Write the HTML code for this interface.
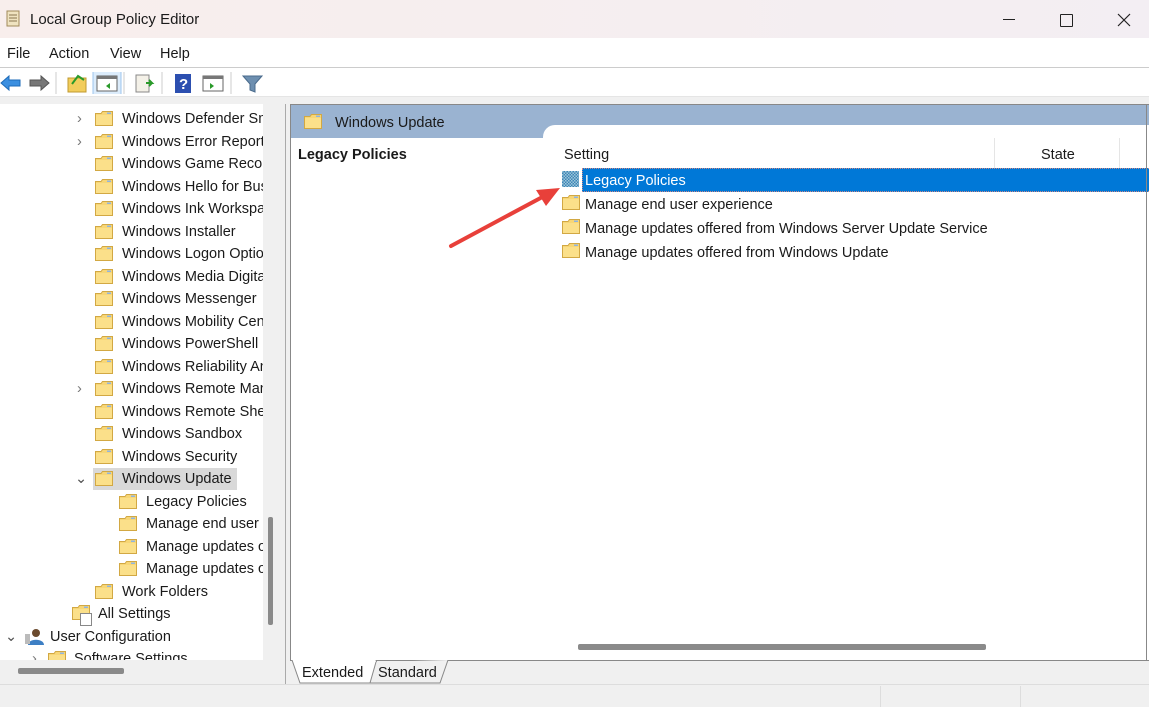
<!DOCTYPE html><html><head><style>
body{margin:0;width:1149px;height:707px;overflow:hidden;background:#f0f0f0;font-family:"Liberation Sans",sans-serif;font-size:14.5px;color:#1a1a1a;position:relative}
.a{position:absolute;white-space:nowrap}
.f{position:absolute;width:18px;height:15px}
.t{position:absolute;line-height:22px}
</style></head><body>
<svg width="0" height="0" style="position:absolute"><defs><symbol id="fd" viewBox="0 0 18 15"><path d="M0.5 2.5 H6 L7.5 0.5 H17.5 V14.5 H0.5Z" fill="#f7d676" stroke="#d2a843"/><rect x="1" y="4" width="16" height="10" fill="#fbe08a"/><rect x="12" y="1.5" width="4" height="1.5" fill="#8fb4e0"/></symbol></defs></svg>
<div class="a" style="left:0;top:0;width:1149px;height:38px;background:linear-gradient(90deg,#f8eeec,#f3eef3)"></div>
<svg class="a" style="left:4px;top:9px" width="18" height="20"><rect x="3" y="2" width="12" height="15" fill="#efe3c0" stroke="#a08a5a"/><path d="M5 6h8M5 9h8M5 12h8" stroke="#8a7550"/></svg>
<div class="a" style="left:30px;top:11px;font-size:15px">Local Group Policy Editor</div>
<div class="a" style="left:1003px;top:19px;width:12px;height:1px;background:#222"></div>
<div class="a" style="left:1060px;top:14px;width:11px;height:11px;border:1px solid #222;border-radius:1px"></div>
<svg class="a" style="left:1117px;top:13px" width="14" height="14"><path d="M1 1L13 13M13 1L1 13" stroke="#222" stroke-width="1.2"/></svg>
<div class="a" style="left:0;top:38px;width:1149px;height:29px;background:#fff;border-bottom:1px solid #ccc"></div>
<div class="a" style="left:7px;top:46px">File</div><div class="a" style="left:49px;top:46px">Action</div><div class="a" style="left:110px;top:46px">View</div><div class="a" style="left:160px;top:46px">Help</div>
<div class="a" style="left:0;top:68px;width:1149px;height:28px;background:#fff;border-bottom:1px solid #e5e5e5"></div>
<svg class="a" style="left:0;top:72px" width="270" height="22">
<path d="M1 11L9 4V8H20V14H9V18Z" fill="#3b8fe0" stroke="#1e6bb8"/>
<path d="M49 11L41 4V8H30V14H41V18Z" fill="#777" stroke="#555"/>
<line x1="56" y1="0" x2="56" y2="22" stroke="#ccc"/>
<rect x="68" y="6" width="18" height="14" fill="#f2cd5c" stroke="#c09a30"/><path d="M72 12 L78 4 L84 8" stroke="#2a9a2a" stroke-width="2" fill="none"/>
<rect x="93" y="-2" width="28" height="26" fill="#dcecfb" stroke="#9cc5ee"/>
<rect x="97" y="4" width="20" height="15" fill="#fff" stroke="#666"/><rect x="97" y="4" width="20" height="3" fill="#777"/><path d="M110 11L106 14L110 17Z" fill="#2a9a2a"/>
<line x1="124" y1="0" x2="124" y2="22" stroke="#ccc"/>
<rect x="136" y="3" width="13" height="17" fill="#f4f1e8" stroke="#888"/><path d="M146 11h6l-3-3M152 11l-3 3" stroke="#2a9a2a" stroke-width="2" fill="none"/>
<line x1="162" y1="0" x2="162" y2="22" stroke="#ccc"/>
<rect x="175" y="2" width="16" height="19" fill="#2c4fb0"/><text x="179" y="17" fill="#fff" font-size="15" font-weight="bold" font-family="Liberation Sans">?</text>
<rect x="203" y="4" width="20" height="15" fill="#fff" stroke="#666"/><rect x="203" y="4" width="20" height="3" fill="#777"/><path d="M210 11L214 14L210 17Z" fill="#2a9a2a"/>
<line x1="231" y1="0" x2="231" y2="22" stroke="#ccc"/>
<path d="M243 4H262L255 12V20L250 18V12Z" fill="#6d8fb0" stroke="#4a6b8c"/>
</svg>
<div class="a" style="left:0;top:104px;width:285px;height:580px;background:#f0f0f0;border-right:1px solid #aaa"></div>
<div class="a" style="left:0;top:104px;width:263px;height:556px;background:#fff"></div>
<div class="a" style="left:268px;top:517px;width:5px;height:108px;background:#8a8a8a;border-radius:2px"></div>
<div class="a" style="left:18px;top:668px;width:106px;height:6px;background:#8a8a8a;border-radius:2px"></div>
<div class="a" style="left:93px;top:468px;width:144px;height:22px;background:#d9d9d9"></div>
<div class="a" style="left:0;top:105px;width:263px;height:555px;overflow:hidden">
<div class="t" style="left:77px;top:3px;color:#777">›</div>
<svg class="f" style="left:95px;top:6px"><use href="#fd"/></svg><div class="t" style="left:122px;top:3px">Windows Defender SmartScreen</div>
<div class="t" style="left:77px;top:26px;color:#777">›</div>
<svg class="f" style="left:95px;top:29px"><use href="#fd"/></svg><div class="t" style="left:122px;top:26px">Windows Error Reporting</div>
<svg class="f" style="left:95px;top:51px"><use href="#fd"/></svg><div class="t" style="left:122px;top:48px">Windows Game Recording</div>
<svg class="f" style="left:95px;top:74px"><use href="#fd"/></svg><div class="t" style="left:122px;top:71px">Windows Hello for Business</div>
<svg class="f" style="left:95px;top:96px"><use href="#fd"/></svg><div class="t" style="left:122px;top:93px">Windows Ink Workspace</div>
<svg class="f" style="left:95px;top:119px"><use href="#fd"/></svg><div class="t" style="left:122px;top:116px">Windows Installer</div>
<svg class="f" style="left:95px;top:141px"><use href="#fd"/></svg><div class="t" style="left:122px;top:138px">Windows Logon Options</div>
<svg class="f" style="left:95px;top:164px"><use href="#fd"/></svg><div class="t" style="left:122px;top:161px">Windows Media Digital</div>
<svg class="f" style="left:95px;top:186px"><use href="#fd"/></svg><div class="t" style="left:122px;top:183px">Windows Messenger</div>
<svg class="f" style="left:95px;top:209px"><use href="#fd"/></svg><div class="t" style="left:122px;top:206px">Windows Mobility Center</div>
<svg class="f" style="left:95px;top:231px"><use href="#fd"/></svg><div class="t" style="left:122px;top:228px">Windows PowerShell</div>
<svg class="f" style="left:95px;top:254px"><use href="#fd"/></svg><div class="t" style="left:122px;top:251px">Windows Reliability Analysis</div>
<div class="t" style="left:77px;top:273px;color:#777">›</div>
<svg class="f" style="left:95px;top:276px"><use href="#fd"/></svg><div class="t" style="left:122px;top:273px">Windows Remote Management</div>
<svg class="f" style="left:95px;top:299px"><use href="#fd"/></svg><div class="t" style="left:122px;top:296px">Windows Remote Shell</div>
<svg class="f" style="left:95px;top:321px"><use href="#fd"/></svg><div class="t" style="left:122px;top:318px">Windows Sandbox</div>
<svg class="f" style="left:95px;top:344px"><use href="#fd"/></svg><div class="t" style="left:122px;top:341px">Windows Security</div>
<div class="t" style="left:75px;top:363px;color:#555">⌄</div>
<svg class="f" style="left:95px;top:366px"><use href="#fd"/></svg><div class="t" style="left:122px;top:363px">Windows Update</div>
<svg class="f" style="left:119px;top:389px"><use href="#fd"/></svg><div class="t" style="left:146px;top:386px">Legacy Policies</div>
<svg class="f" style="left:119px;top:411px"><use href="#fd"/></svg><div class="t" style="left:146px;top:408px">Manage end user experience</div>
<svg class="f" style="left:119px;top:434px"><use href="#fd"/></svg><div class="t" style="left:146px;top:431px">Manage updates offered</div>
<svg class="f" style="left:119px;top:456px"><use href="#fd"/></svg><div class="t" style="left:146px;top:453px">Manage updates offered</div>
<svg class="f" style="left:95px;top:479px"><use href="#fd"/></svg><div class="t" style="left:122px;top:476px">Work Folders</div>
<svg class="f" style="left:72px;top:500px"><use href="#fd"/></svg><div class="a" style="left:80px;top:508px;width:10px;height:11px;background:#fff;border:1px solid #888"></div><div class="t" style="left:98px;top:498px">All Settings</div>
<div class="t" style="left:5px;top:521px;color:#555">⌄</div>
<svg class="a" style="left:24px;top:523px" width="20" height="18"><circle cx="12" cy="5" r="4" fill="#6b4a2e"/><path d="M4 17C4 10 20 10 20 17Z" fill="#3d7fc4"/><rect x="1" y="6" width="5" height="10" fill="#bbb"/></svg><div class="t" style="left:50px;top:521px">User Configuration</div>
<div class="t" style="left:32px;top:543px;color:#777">›</div>
<svg class="f" style="left:48px;top:546px"><use href="#fd"/></svg><div class="t" style="left:74px;top:543px">Software Settings</div>
</div>
<div class="a" style="left:290px;top:104px;width:859px;height:556px;background:#fff;border-left:1px solid #888;border-top:1px solid #888"></div>
<div class="a" style="left:291px;top:105px;width:858px;height:33px;background:#9ab3d1"></div>
<div class="a" style="left:543px;top:125px;width:606px;height:14px;background:#fff;border-top-left-radius:12px"></div>
<svg class="f" style="left:304px;top:114px"><use href="#fd"/></svg>
<div class="a" style="left:335px;top:115px">Windows Update</div>
<div class="a" style="left:298px;top:147px;font-weight:bold">Legacy Policies</div>
<div class="a" style="left:564px;top:147px">Setting</div>
<div class="a" style="left:994px;top:138px;width:1px;height:30px;background:#e5e5e5"></div>
<div class="a" style="left:1119px;top:138px;width:1px;height:30px;background:#e5e5e5"></div>
<div class="a" style="left:1041px;top:147px">State</div>
<div class="a" style="left:582px;top:168px;width:567px;height:22px;background:#0078d7;border:1px dotted #c88"></div>
<svg class="a" style="left:562px;top:171px" width="17" height="16"><defs><pattern id="ck" width="3" height="3" patternUnits="userSpaceOnUse"><rect width="3" height="3" fill="#3e84b8"/><rect width="1.5" height="1.5" fill="#9cc7d8"/><rect x="1.5" y="1.5" width="1.5" height="1.5" fill="#9cc7d8"/></pattern></defs><rect width="17" height="16" fill="url(#ck)"/></svg>
<div class="a" style="left:585px;top:173px;color:#fff">Legacy Policies</div>
<svg class="f" style="left:562px;top:195px"><use href="#fd"/></svg><div class="a" style="left:585px;top:197px">Manage end user experience</div>
<svg class="f" style="left:562px;top:219px"><use href="#fd"/></svg><div class="a" style="left:585px;top:221px">Manage updates offered from Windows Server Update Service</div>
<svg class="f" style="left:562px;top:243px"><use href="#fd"/></svg><div class="a" style="left:585px;top:245px">Manage updates offered from Windows Update</div>
<svg class="a" style="left:440px;top:180px" width="130" height="75"><line x1="11" y1="66" x2="108" y2="14" stroke="#e8403a" stroke-width="4" stroke-linecap="round"/><path d="M120 8L96 10L106 26Z" fill="#e8403a"/></svg>
<div class="a" style="left:578px;top:644px;width:408px;height:6px;background:#8a8a8a;border-radius:2px"></div>
<div class="a" style="left:1146px;top:104px;width:1px;height:556px;background:#888"></div>
<div class="a" style="left:290px;top:660px;width:859px;height:1px;background:#888"></div>
<svg class="a" style="left:290px;top:660px" width="170" height="26"><path d="M2 0L10 23H82L88 8L86 0" fill="#fff" stroke="#888"/><path d="M86 2L80 23H150L158 0" fill="#f0f0f0" stroke="#888"/></svg>
<div class="a" style="left:302px;top:665px">Extended</div>
<div class="a" style="left:378px;top:665px">Standard</div>
<div class="a" style="left:0;top:684px;width:1149px;height:1px;background:#ddd"></div>
<div class="a" style="left:880px;top:686px;width:1px;height:21px;background:#ddd"></div>
<div class="a" style="left:1020px;top:686px;width:1px;height:21px;background:#ddd"></div>
</body></html>
